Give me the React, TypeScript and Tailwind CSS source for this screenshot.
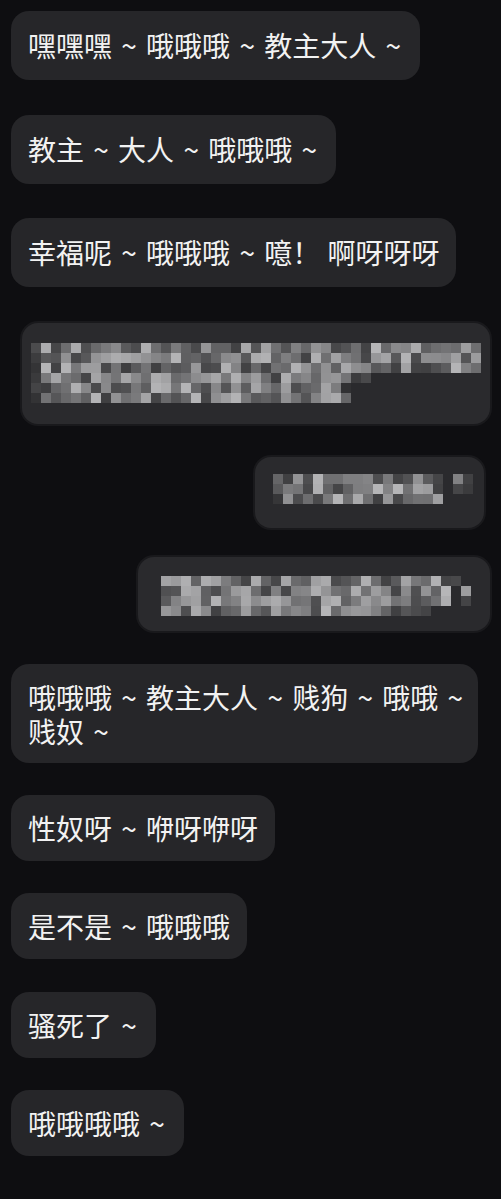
import React from "react";

const font = { fontFamily: '"Noto Sans CJK SC", "Noto Sans", sans-serif' };

function rand(seed: number) {
  let s = seed;
  return () => {
    s = (s * 9301 + 49297) % 233280;
    return s / 233280;
  };
}

// pixelated redaction: '#' bright cell, ':' dim cell, '.' empty
function Mosaic({ rows, seed }: { rows: string[]; seed: number }) {
  const r = rand(seed);
  const cell = 10;
  const width = Math.max(...rows.map((row) => row.length)) * cell;
  const rects: React.ReactNode[] = [];
  rows.forEach((row, y) => {
    row.split("").forEach((c, x) => {
      if (c === ".") return;
      const v = c === "#" ? Math.round(62 + r() * 120) : Math.round(48 + r() * 30);
      rects.push(
        <rect key={`${y}-${x}`} x={x * cell} y={y * cell} width={cell} height={cell} fill={`rgb(${v},${v},${v + 2})`} />
      );
    });
  });
  return (
    <svg width={width} height={rows.length * cell} className="block">
      {rects}
    </svg>
  );
}

function T() {
  return <span className="mx-[2px]">~</span>;
}

function Bubble({ children, className = "" }: { children: React.ReactNode; className?: string }) {
  return (
    <div
      className={`self-start rounded-[18px] bg-[#262629] px-[17px] text-[28px] text-[#f2f2f2] [word-spacing:1px] ${className}`}
      style={font}
    >
      {children}
    </div>
  );
}

export default function App() {
  return (
    <main className="flex min-h-screen w-[501px] flex-col bg-[#0e0e11] pb-10 pl-[11px]">
      <Bubble className="mt-[11px] py-[16px] leading-[37px]">
        嘿嘿嘿 <T /> 哦哦哦 <T /> 教主大人 <T />
      </Bubble>
      <Bubble className="mt-[35px] py-[16px] leading-[37px]">
        教主 <T /> 大人 <T /> 哦哦哦 <T />
      </Bubble>
      <Bubble className="mt-[34px] py-[16px] leading-[37px]">
        幸福呢 <T /> 哦哦哦 <T /> 噫！ 啊呀呀呀
      </Bubble>

      <div className="ml-[11px] mt-[36px] h-[101px] w-[468px] rounded-[16px] bg-[#2a2a2d] pl-[9px] pt-[20px] shadow-[0_0_0_2px_#19191c]">
        <Mosaic
          seed={17}
          rows={[
            ":############################################",
            ":############################################",
            ":############################################",
            ":###############################::...........",
            ":##############################:.............",
            ":###############################.............",
          ]}
        />
      </div>

      <div className="ml-[244px] mt-[33px] h-[71px] w-[229px] rounded-[16px] bg-[#2a2a2d] pl-[18px] pt-[17px] shadow-[0_0_0_2px_#19191c]">
        <Mosaic
          seed={53}
          rows={["#################.#:", "#################.::", ":################..."]}
        />
      </div>

      <div className="ml-[127px] mt-[29px] h-[74px] w-[352px] rounded-[16px] bg-[#2a2a2d] pl-[13px] pt-[19px] shadow-[0_0_0_2px_#19191c]">
        <Mosaic
          seed={91}
          rows={[
            ".#############################:",
            ".#############################.#",
            ".#############################.:",
            ".##########################:....",
          ]}
        />
      </div>

      <Bubble className="mt-[33px] w-[467px] whitespace-nowrap pb-[15px] pt-[16px] leading-[34px]">
        <div>
          哦哦哦 <T /> 教主大人 <T /> 贱狗 <T /> 哦哦 <T />
        </div>
        <div>
          贱奴 <T />
        </div>
      </Bubble>
      <Bubble className="mt-[32px] py-[15px] leading-[36px]">
        性奴呀 <T /> 咿呀咿呀
      </Bubble>
      <Bubble className="mt-[32px] py-[15px] leading-[36px]">
        是不是 <T /> 哦哦哦
      </Bubble>
      <Bubble className="mt-[33px] py-[15px] leading-[36px]">
        骚死了 <T />
      </Bubble>
      <Bubble className="mt-[32px] py-[15px] leading-[36px]">
        哦哦哦哦 <T />
      </Bubble>
    </main>
  );
}
